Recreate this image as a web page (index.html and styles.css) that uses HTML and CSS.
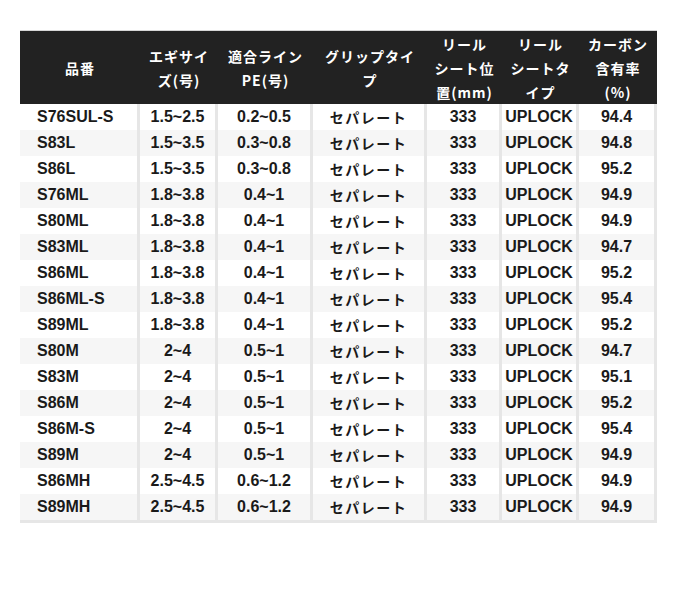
FILE: index.html
```html
<!DOCTYPE html>
<html lang="ja">
<head>
<meta charset="utf-8">
<link rel="stylesheet" href="styles.css">
</head>
<body>
<table class="spec">
  <colgroup>
    <col class="c1"><col class="c2"><col class="c3"><col class="c4"><col class="c5"><col class="c6"><col class="c7">
  </colgroup>
  <thead>
    <tr>
      <th>品番</th>
      <th>エギサイ<br>ズ(号)</th>
      <th>適合ライン<br>PE(号)</th>
      <th>グリップタイ<br>プ</th>
      <th>リール<br>シート位<br>置(mm)</th>
      <th>リール<br>シートタ<br>イプ</th>
      <th>カーボン<br>含有率<br>(%)</th>
    </tr>
  </thead>
  <tbody>
    <tr><td>S76SUL-S</td><td>1.5~2.5</td><td>0.2~0.5</td><td>セパレート</td><td>333</td><td>UPLOCK</td><td>94.4</td></tr>
    <tr><td>S83L</td><td>1.5~3.5</td><td>0.3~0.8</td><td>セパレート</td><td>333</td><td>UPLOCK</td><td>94.8</td></tr>
    <tr><td>S86L</td><td>1.5~3.5</td><td>0.3~0.8</td><td>セパレート</td><td>333</td><td>UPLOCK</td><td>95.2</td></tr>
    <tr><td>S76ML</td><td>1.8~3.8</td><td>0.4~1</td><td>セパレート</td><td>333</td><td>UPLOCK</td><td>94.9</td></tr>
    <tr><td>S80ML</td><td>1.8~3.8</td><td>0.4~1</td><td>セパレート</td><td>333</td><td>UPLOCK</td><td>94.9</td></tr>
    <tr><td>S83ML</td><td>1.8~3.8</td><td>0.4~1</td><td>セパレート</td><td>333</td><td>UPLOCK</td><td>94.7</td></tr>
    <tr><td>S86ML</td><td>1.8~3.8</td><td>0.4~1</td><td>セパレート</td><td>333</td><td>UPLOCK</td><td>95.2</td></tr>
    <tr><td>S86ML-S</td><td>1.8~3.8</td><td>0.4~1</td><td>セパレート</td><td>333</td><td>UPLOCK</td><td>95.4</td></tr>
    <tr><td>S89ML</td><td>1.8~3.8</td><td>0.4~1</td><td>セパレート</td><td>333</td><td>UPLOCK</td><td>95.2</td></tr>
    <tr><td>S80M</td><td>2~4</td><td>0.5~1</td><td>セパレート</td><td>333</td><td>UPLOCK</td><td>94.7</td></tr>
    <tr><td>S83M</td><td>2~4</td><td>0.5~1</td><td>セパレート</td><td>333</td><td>UPLOCK</td><td>95.1</td></tr>
    <tr><td>S86M</td><td>2~4</td><td>0.5~1</td><td>セパレート</td><td>333</td><td>UPLOCK</td><td>95.2</td></tr>
    <tr><td>S86M-S</td><td>2~4</td><td>0.5~1</td><td>セパレート</td><td>333</td><td>UPLOCK</td><td>95.4</td></tr>
    <tr><td>S89M</td><td>2~4</td><td>0.5~1</td><td>セパレート</td><td>333</td><td>UPLOCK</td><td>94.9</td></tr>
    <tr><td>S86MH</td><td>2.5~4.5</td><td>0.6~1.2</td><td>セパレート</td><td>333</td><td>UPLOCK</td><td>94.9</td></tr>
    <tr><td>S89MH</td><td>2.5~4.5</td><td>0.6~1.2</td><td>セパレート</td><td>333</td><td>UPLOCK</td><td>94.9</td></tr>
  </tbody>
</table>
</body>
</html>
```
FILE: styles.css
```css
html, body {
  margin: 0;
  padding: 0;
  background: #ffffff;
}
body {
  padding: 30px 0 0 20px;
  font-family: "Liberation Sans", "Noto Sans CJK JP", sans-serif;
  color: #1a1a1a;
}
.spec {
  border-collapse: separate;
  border-spacing: 0;
  table-layout: fixed;
  width: 637px;
  border-top: 1px solid #d6d6d6;
  border-bottom: 3px solid #e6e6e6;
}
.c1 { width: 120px; }
.c2 { width: 78px; }
.c3 { width: 95px; }
.c4 { width: 114px; }
.c5 { width: 75px; }
.c6 { width: 77px; }
.c7 { width: 78px; }
.spec th {
  background: #222222;
  color: #ffffff;
  font-family: "Noto Sans CJK JP", sans-serif;
  font-weight: 700;
  font-size: 14px;
  line-height: 24px;
  letter-spacing: 1px;
  height: 73px;
  padding: 0;
  text-align: center;
  vertical-align: middle;
}
.spec td {
  font-weight: 700;
  font-size: 16px;
  line-height: 26px;
  height: 26px;
  padding: 0;
  text-align: center;
  white-space: nowrap;
  border-right: 3px solid #e6e6e6;
}
.spec td:first-child {
  text-align: left;
  padding-left: 17px;
}
.spec td:nth-child(4) {
  font-family: "Noto Sans CJK JP", sans-serif;
  letter-spacing: 1.5px;
  font-size: 14px;
}
.spec tbody tr:nth-child(even) td {
  background: #f6f6f6;
}
```
